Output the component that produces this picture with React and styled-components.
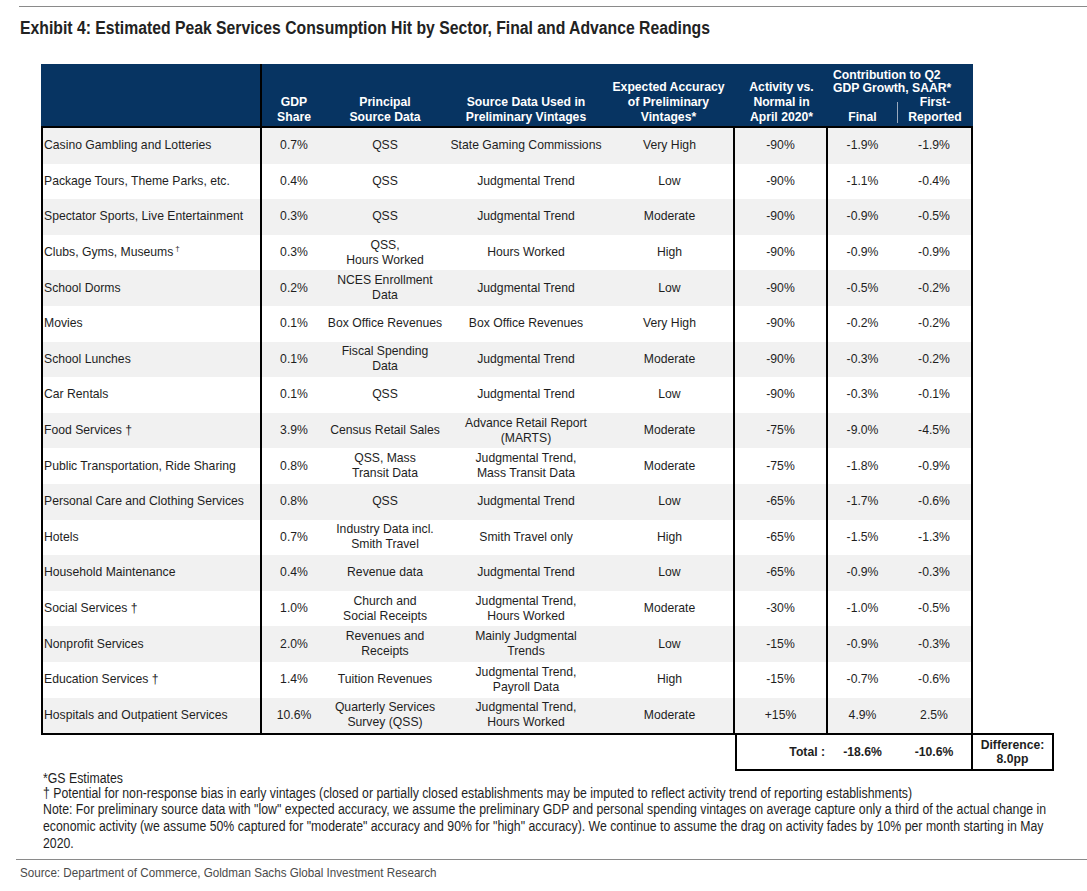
import React from "react";
import styled, { createGlobalStyle } from "styled-components";

const GlobalStyle = createGlobalStyle`
  html, body { margin: 0; padding: 0; background: #ffffff; }
  body { font-family: "Liberation Sans", Arial, sans-serif; color: #1e1e1e; }
`;

const HEAD_COLS = "221px 64px 118px 164px 127px 93px 69px 76px";
const BODY_COLS = "219px 64px 118px 164px 127px 93px 69px 74px";

const Page = styled.div`
  width: 1087px;
  height: 891px;
  padding-top: 6px;
  box-sizing: border-box;
  overflow: hidden;
`;

const Rule = styled.div`
  height: 1px;
  background: #8a8a8a;
  margin-left: ${(p) => p.$left}px;
`;

const Title = styled.h1`
  margin: 10px 0 0 20px;
  font-family: "Liberation Sans", Arial, sans-serif;
  font-weight: 700;
  font-size: 18px;
  line-height: 22px;
  color: #222;
  white-space: nowrap;
  transform: scaleX(0.875);
  transform-origin: left center;
`;

const TableWrap = styled.div`
  margin: 25px 0 0 41px;
  width: 1013px;
`;

const Header = styled.div`
  display: grid;
  grid-template-columns: ${HEAD_COLS};
  grid-template-rows: 31px 31px;
  width: 932px;
  background: #073462;
  color: #ffffff;
  font-weight: 700;
  font-size: 12.2px;
`;

const HeadCell = styled.div`
  grid-row: ${(p) => p.$row || "1 / span 2"};
  grid-column: ${(p) => p.$col || "auto"};
  display: flex;
  flex-direction: column;
  justify-content: flex-end;
  align-items: ${(p) => (p.$left ? "flex-start" : "center")};
  text-align: ${(p) => (p.$left ? "left" : "center")};
  line-height: ${(p) => p.$lh || 14.7}px;
  padding: 0 ${(p) => p.$pr || 0}px ${(p) => p.$pb ?? 1.5}px ${(p) => p.$pl || 0}px;
  border-right: ${(p) => (p.$divider ? "2px solid #000" : "none")};
  white-space: pre-line;
  position: relative;
  box-sizing: border-box;
`;

const SubSep = styled.span`
  position: absolute;
  left: 0;
  top: 7px;
  bottom: 3px;
  width: 1px;
  background: #9aa9bd;
`;

const Body = styled.div`
  width: 932px;
  box-sizing: border-box;
  border: 2px solid #000;
`;

const Row = styled.div`
  display: grid;
  grid-template-columns: ${BODY_COLS};
  height: 35.6px;
  background: ${(p) => (p.$shade ? "#f1f1f1" : "#ffffff")};
  font-size: 12.2px;
  line-height: 15px;
  color: #1e1e1e;
`;

const Cell = styled.div`
  display: flex;
  align-items: center;
  justify-content: ${(p) => (p.$left ? "flex-start" : "center")};
  text-align: ${(p) => (p.$left ? "left" : "center")};
  padding: 0 ${(p) => p.$pr || 0}px 0 ${(p) => (p.$left ? 1 : 0)}px;
  border-right: ${(p) => (p.$divider ? "2px solid #000" : "none")};
  white-space: pre-line;
  box-sizing: border-box;
`;

const Sup = styled.sup`
  font-size: 8px;
  vertical-align: 5px;
  line-height: 0;
  margin-left: 2px;
`;

const TotalRow = styled.div`
  display: flex;
  margin-top: -2px;
`;

const Spacer = styled.div`
  flex: 0 0 694px;
`;

const TotalBox = styled.div`
  flex: 0 0 238px;
  height: 38px;
  box-sizing: border-box;
  border: 2px solid #000;
  display: grid;
  grid-template-columns: 91px 69px 74px;
  font-weight: 700;
  font-size: 12.2px;
`;

const TotalCell = styled.div`
  display: flex;
  align-items: center;
  justify-content: ${(p) => (p.$right ? "flex-end" : "center")};
  padding-right: ${(p) => (p.$right ? 3 : 0)}px;
`;

const DiffBox = styled.div`
  flex: 0 0 81px;
  height: 38px;
  box-sizing: border-box;
  border: 2px solid #000;
  border-left: none;
  display: flex;
  align-items: center;
  justify-content: center;
  text-align: center;
  font-weight: 700;
  font-size: 12.2px;
  line-height: 14.5px;
  white-space: pre-line;
`;

const Notes = styled.div`
  margin-left: 43px;
  font-family: "Liberation Sans", Arial, sans-serif;
  font-size: 14px;
  color: #1e1e1e;
`;

const NoteLine = styled.div`
  line-height: ${(p) => p.$lh || 15}px;
  white-space: nowrap;
  transform: scaleX(0.878);
  transform-origin: left center;
`;

const BottomRule = styled(Rule)`
  margin-top: 7px;
`;

const Source = styled.div`
  margin: 5px 0 0 20px;
  font-family: "Liberation Sans", Arial, sans-serif;
  font-size: 13.5px;
  line-height: 15px;
  color: #4a4a4a;
  white-space: nowrap;
  transform: scaleX(0.862);
  transform-origin: left center;
`;

const rows = [
  ["Casino Gambling and Lotteries", "0.7%", "QSS", "State Gaming Commissions", "Very High", "-90%", "-1.9%", "-1.9%"],
  ["Package Tours, Theme Parks, etc.", "0.4%", "QSS", "Judgmental Trend", "Low", "-90%", "-1.1%", "-0.4%"],
  ["Spectator Sports, Live Entertainment", "0.3%", "QSS", "Judgmental Trend", "Moderate", "-90%", "-0.9%", "-0.5%"],
  ["Clubs, Gyms, Museums", "0.3%", "QSS,\nHours Worked", "Hours Worked", "High", "-90%", "-0.9%", "-0.9%", true],
  ["School Dorms", "0.2%", "NCES Enrollment\nData", "Judgmental Trend", "Low", "-90%", "-0.5%", "-0.2%"],
  ["Movies", "0.1%", "Box Office Revenues", "Box Office Revenues", "Very High", "-90%", "-0.2%", "-0.2%"],
  ["School Lunches", "0.1%", "Fiscal Spending\nData", "Judgmental Trend", "Moderate", "-90%", "-0.3%", "-0.2%"],
  ["Car Rentals", "0.1%", "QSS", "Judgmental Trend", "Low", "-90%", "-0.3%", "-0.1%"],
  ["Food Services †", "3.9%", "Census Retail Sales", "Advance Retail Report\n(MARTS)", "Moderate", "-75%", "-9.0%", "-4.5%"],
  ["Public Transportation, Ride Sharing", "0.8%", "QSS, Mass\nTransit Data", "Judgmental Trend,\nMass Transit Data", "Moderate", "-75%", "-1.8%", "-0.9%"],
  ["Personal Care and Clothing Services", "0.8%", "QSS", "Judgmental Trend", "Low", "-65%", "-1.7%", "-0.6%"],
  ["Hotels", "0.7%", "Industry Data incl.\nSmith Travel", "Smith Travel only", "High", "-65%", "-1.5%", "-1.3%"],
  ["Household Maintenance", "0.4%", "Revenue data", "Judgmental Trend", "Low", "-65%", "-0.9%", "-0.3%"],
  ["Social Services †", "1.0%", "Church and\nSocial Receipts", "Judgmental Trend,\nHours Worked", "Moderate", "-30%", "-1.0%", "-0.5%"],
  ["Nonprofit Services", "2.0%", "Revenues and\nReceipts", "Mainly Judgmental\nTrends", "Low", "-15%", "-0.9%", "-0.3%"],
  ["Education Services †", "1.4%", "Tuition Revenues", "Judgmental Trend,\nPayroll Data", "High", "-15%", "-0.7%", "-0.6%"],
  ["Hospitals and Outpatient Services", "10.6%", "Quarterly Services\nSurvey (QSS)", "Judgmental Trend,\nHours Worked", "Moderate", "+15%", "4.9%", "2.5%"],
];

export default function App() {
  return (
    <>
      <GlobalStyle />
      <Page>
        <Rule $left={19} />
        <Title>Exhibit 4: Estimated Peak Services Consumption Hit by Sector, Final and Advance Readings</Title>
        <TableWrap>
          <Header>
            <HeadCell $divider />
            <HeadCell>{"GDP\nShare"}</HeadCell>
            <HeadCell>{"Principal\nSource Data"}</HeadCell>
            <HeadCell>{"Source Data Used in\nPreliminary Vintages"}</HeadCell>
            <HeadCell $pr={6}>{"Expected Accuracy\nof Preliminary\nVintages*"}</HeadCell>
            <HeadCell>{"Activity vs.\nNormal in\nApril 2020*"}</HeadCell>
            <HeadCell $row="1" $col="7 / span 2" $left $pl={5} $lh={13} $pb={0}>
              {"Contribution to Q2\nGDP Growth, SAAR*"}
            </HeadCell>
            <HeadCell $row="2" $col="7">Final</HeadCell>
            <HeadCell $row="2" $col="8">
              <SubSep />
              {"   First-\nReported"}
            </HeadCell>
          </Header>
          <Body>
            {rows.map((r, i) => (
              <Row key={i} $shade={i % 2 === 0}>
                <Cell $left $divider>
                  <span>
                    {r[0]}
                    {r[8] && <Sup>†</Sup>}
                  </span>
                </Cell>
                <Cell>{r[1]}</Cell>
                <Cell>{r[2]}</Cell>
                <Cell>{r[3]}</Cell>
                <Cell $divider $pr={2}>{r[4]}</Cell>
                <Cell $divider>{r[5]}</Cell>
                <Cell>{r[6]}</Cell>
                <Cell>{r[7]}</Cell>
              </Row>
            ))}
          </Body>
          <TotalRow>
            <Spacer />
            <TotalBox>
              <TotalCell $right>Total :</TotalCell>
              <TotalCell>-18.6%</TotalCell>
              <TotalCell>-10.6%</TotalCell>
            </TotalBox>
            <DiffBox>{"Difference:\n8.0pp"}</DiffBox>
          </TotalRow>
        </TableWrap>
        <Notes>
          <NoteLine>*GS Estimates</NoteLine>
          <NoteLine>
            † Potential for non-response bias in early vintages (closed or partially closed establishments may be imputed to reflect activity trend of reporting establishments)
          </NoteLine>
          <NoteLine $lh={17}>
            Note: For preliminary source data with "low" expected accuracy, we assume the preliminary GDP and personal spending vintages on average capture only a third of the actual change in
          </NoteLine>
          <NoteLine $lh={17}>
            economic activity (we assume 50% captured for "moderate" accuracy and 90% for "high" accuracy). We continue to assume the drag on activity fades by 10% per month starting in May
          </NoteLine>
          <NoteLine $lh={17}>2020.</NoteLine>
        </Notes>
        <BottomRule $left={16} />
        <Source>Source: Department of Commerce, Goldman Sachs Global Investment Research</Source>
      </Page>
    </>
  );
}
